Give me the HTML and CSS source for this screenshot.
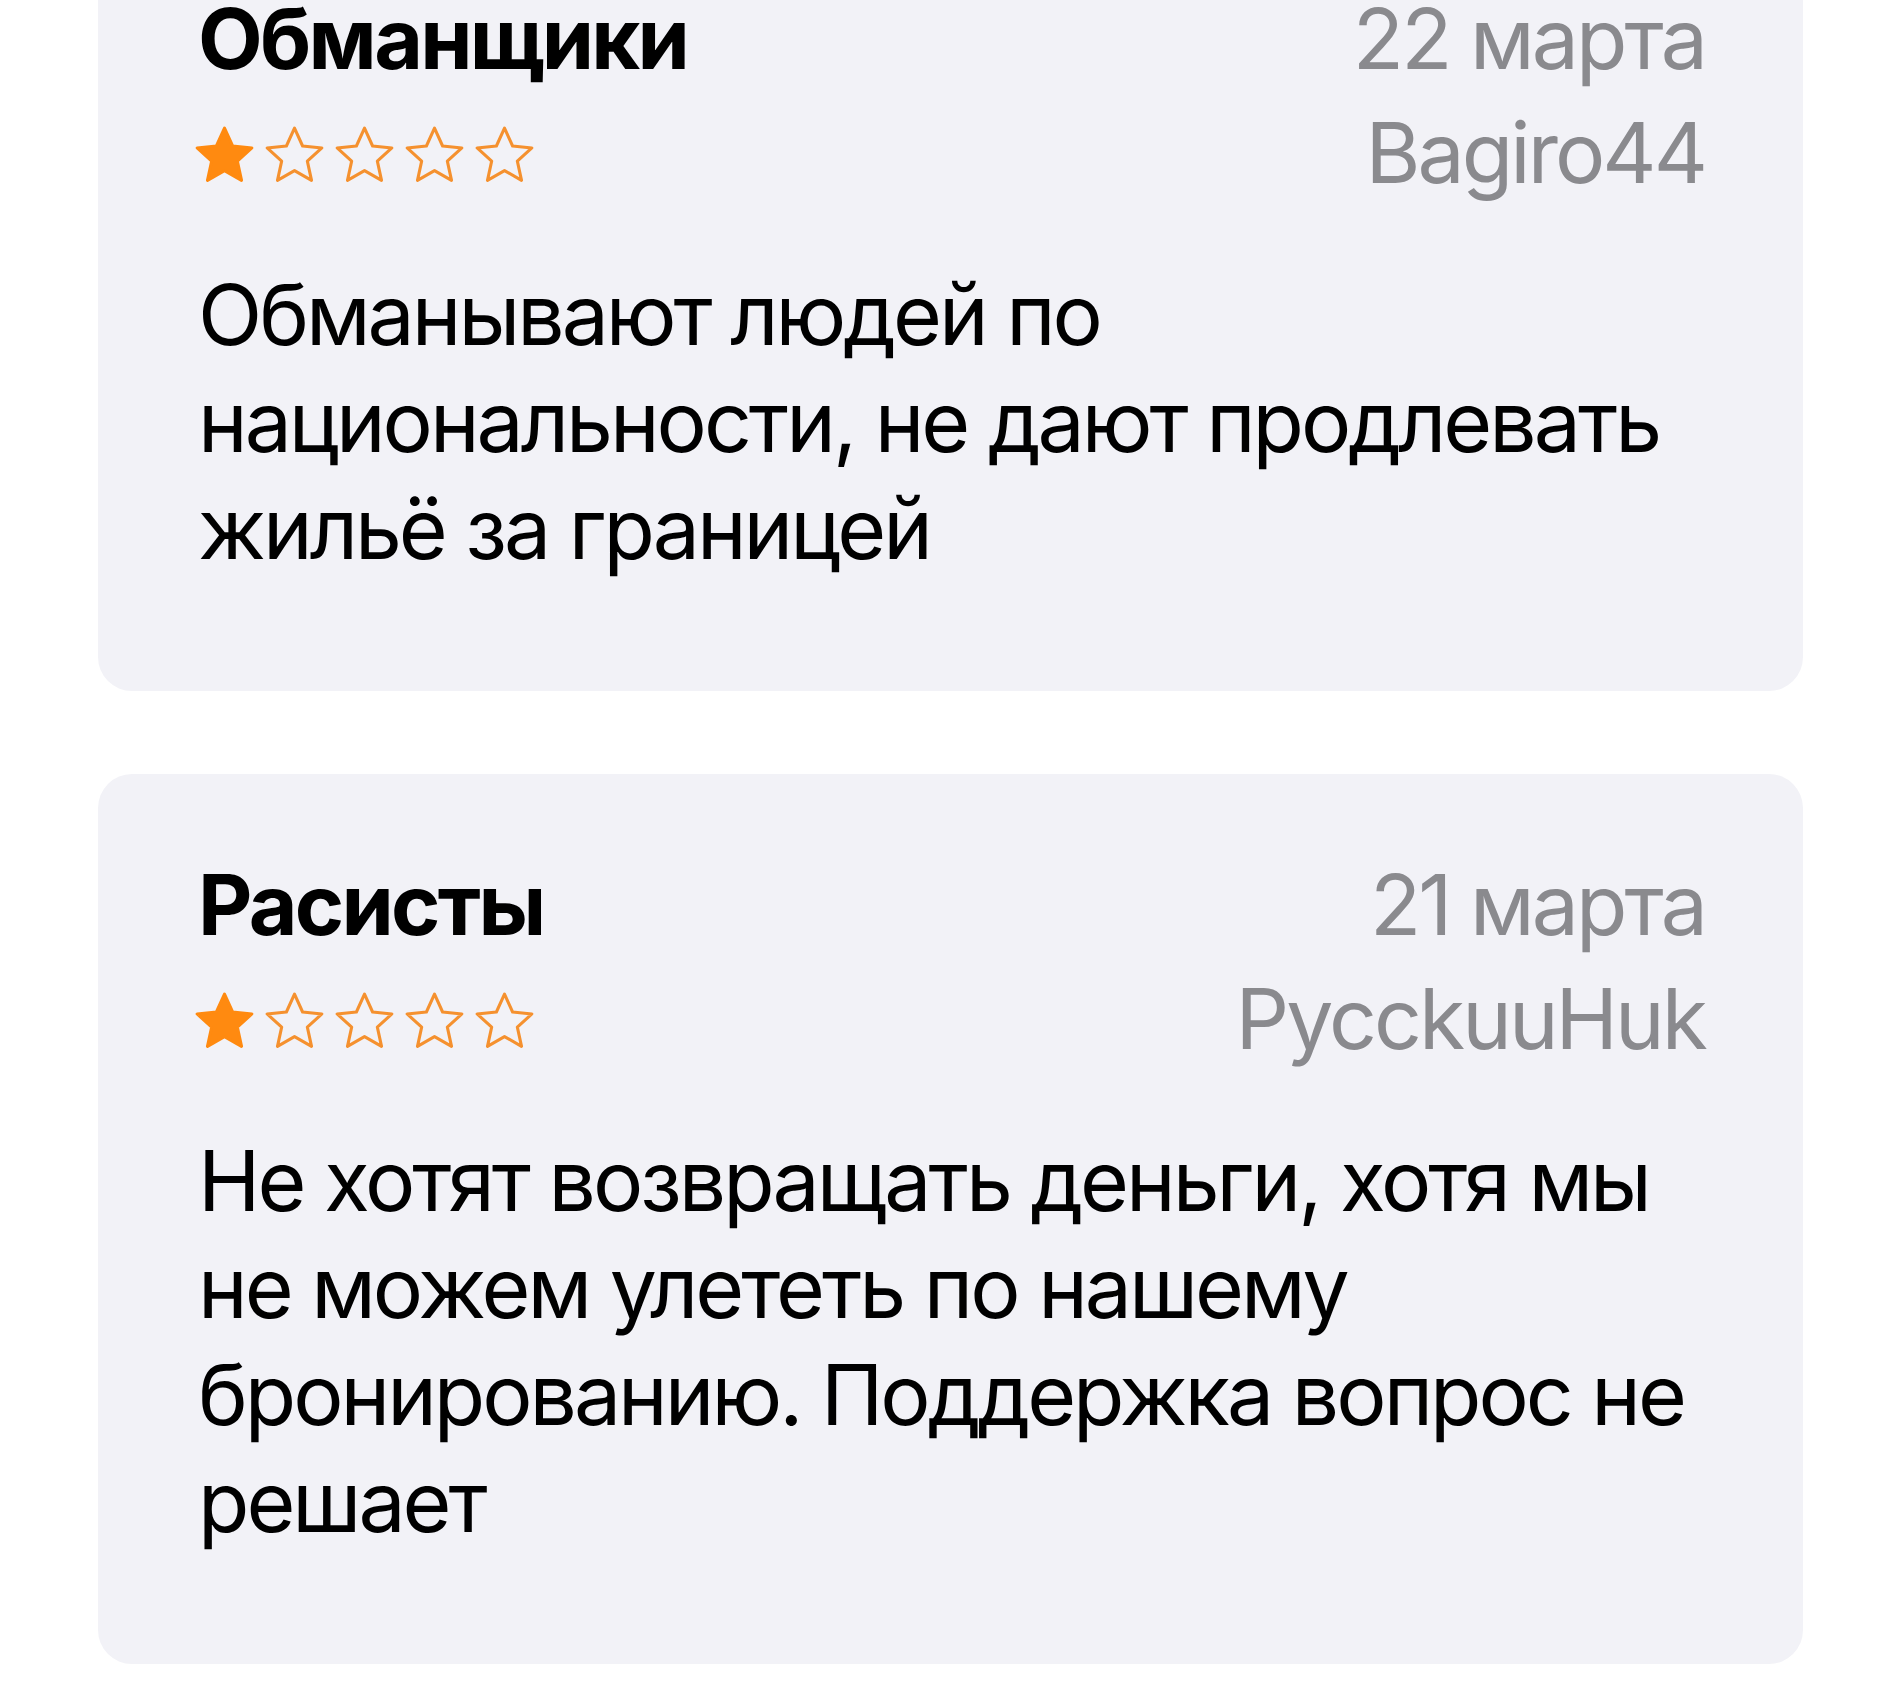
FILE: index.html
```html
<!DOCTYPE html>
<html>
<head>
    <title>Отзывы</title>
    <link rel="stylesheet" href="styles.css">
</head>
<body>
    <svg class="defs" width="0" height="0">
        <symbol id="star" viewBox="0 0 24 24">
            <polygon points="12,2.2 14.9,8.6 21.8,9.3 16.6,14 18.1,20.9 12,17.4 5.9,20.9 7.4,14 2.2,9.3 9.1,8.6"/>
        </symbol>
    </svg>

    <div class="reviews">
        <div class="review">
            <div class="review-head">
                <div class="review-left">
                    <h3 class="review-title">Обманщики</h3>
                    <div class="stars">
                        <svg class="star full"><use href="#star"/></svg>
                        <svg class="star"><use href="#star"/></svg>
                        <svg class="star"><use href="#star"/></svg>
                        <svg class="star"><use href="#star"/></svg>
                        <svg class="star"><use href="#star"/></svg>
                    </div>
                </div>
                <div class="review-meta">
                    <div>22 марта</div>
                    <div>Bagiro44</div>
                </div>
            </div>
            <p class="review-text">Обманывают людей по национальности, не дают продлевать жильё за границей</p>
        </div>

        <div class="review">
            <div class="review-head">
                <div class="review-left">
                    <h3 class="review-title">Расисты</h3>
                    <div class="stars">
                        <svg class="star full"><use href="#star"/></svg>
                        <svg class="star"><use href="#star"/></svg>
                        <svg class="star"><use href="#star"/></svg>
                        <svg class="star"><use href="#star"/></svg>
                        <svg class="star"><use href="#star"/></svg>
                    </div>
                </div>
                <div class="review-meta">
                    <div>21 марта</div>
                    <div>PycckuuHuk</div>
                </div>
            </div>
            <p class="review-text">Не хотят возвращать деньги, хотя мы не можем улететь по нашему бронированию. Поддержка вопрос не решает</p>
        </div>
    </div>
</body>
</html>
```

FILE: styles.css
```css
body {
    margin: 0;
    padding: 0;
    background-color: #ffffff;
    font-family: Inter, "Noto Sans", sans-serif;
    font-size: 84px;
    color: #000000;
}

.defs {
    position: absolute;
}

.reviews {
    display: flex;
    flex-direction: column;
    gap: 83px;
    margin: -92px 97px 0 98px;
}

.review {
    background-color: #f2f2f7;
    border-radius: 34px;
    padding: 74px 98px 109px 100px;
}

.review-head {
    display: flex;
    justify-content: space-between;
    line-height: 114px;
}

.review-title {
    margin: 0;
    font-size: 84px;
    font-weight: 700;
    letter-spacing: -0.032em;
}

.stars {
    display: flex;
    align-items: center;
    gap: 3px;
    height: 114px;
    padding-top: 4px;
    box-sizing: border-box;
    margin-left: -7px;
}

.star {
    width: 67px;
    height: 67px;
    fill: none;
    stroke: #f5912f;
    stroke-width: 1.1;
    stroke-linejoin: round;
}

.star.full {
    fill: #ff8a10;
    stroke: #ff8a10;
}

.review-meta {
    text-align: right;
    color: #8a8a8e;
    letter-spacing: -0.035em;
}

.review-text {
    margin: 51px 0 0 0;
    line-height: 107px;
    letter-spacing: -0.036em;
}
```
